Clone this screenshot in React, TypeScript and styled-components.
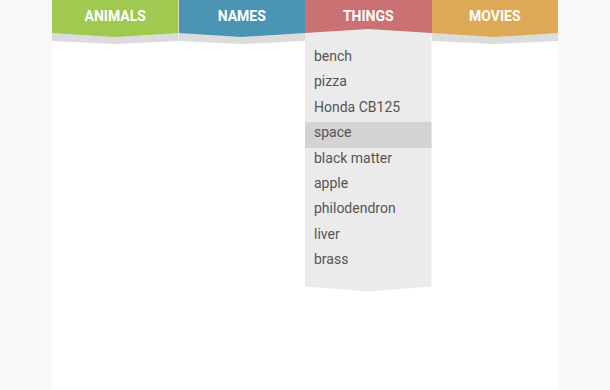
import React, { useState } from 'react';
import styled, { createGlobalStyle } from 'styled-components';

const GlobalStyle = createGlobalStyle`
  html, body {
    margin: 0;
    height: 100%;
    background: #f8f8f8;
    font-family: Roboto, "Liberation Sans", Arial, sans-serif;
  }
  #root {
    height: 100%;
  }
`

const Page = styled.div`
  width: 506px;
  height: 100%;
  margin: 0 auto;
  background: #fff;
`

const Nav = styled.nav`
  display: grid;
  grid-template-columns: repeat(4, 1fr);
`

const Tab = styled.div`
  position: relative;
  height: 44px;
  background: ${p => (p.$open ? 'transparent' : '#dcdcdc')};
  clip-path: ${p => (p.$open ? 'none' : 'polygon(0 0, 100% 0, 100% 41px, 50% 44px, 0 41px)')};
`

const TabHead = styled.button`
  display: block;
  width: 100%;
  height: ${p => (p.$open ? '33px' : '37px')};
  padding: ${p => (p.$open ? '0' : '0 0 4px')};
  border: 0;
  background: ${p => p.$color};
  color: #fff;
  font: bold 14px/33px Roboto, "Liberation Sans", Arial, sans-serif;
  text-transform: uppercase;
  cursor: pointer;
  clip-path: ${p => (p.$open ? 'none' : 'polygon(0 0, 100% 0, 100% 33px, 50% 37px, 0 33px)')};
`

const Menu = styled.ul`
  position: absolute;
  top: 29px;
  left: 0;
  right: 0;
  margin: 0;
  padding: 17px 0 17px;
  list-style: none;
  background: #ebebeb;
  clip-path: polygon(0 4px, 50% 0, 100% 4px, 100% calc(100% - 5px), 50% 100%, 0 calc(100% - 5px));
  z-index: 2;
`

const Item = styled.li`
  height: 25.4px;
  box-sizing: border-box;
  padding: 0 9px 3.6px;
  font-size: 14px;
  line-height: 21.8px;
  color: #555;
  background: ${p => (p.$hover ? '#d3d3d3' : 'transparent')};
  cursor: pointer;
`

const tabs = [
  { name: 'animals', color: '#9fc94f', items: [] as string[] },
  { name: 'names', color: '#4b94b3', items: [] as string[] },
  {
    name: 'things',
    color: '#c97173',
    items: ['bench', 'pizza', 'Honda CB125', 'space', 'black matter', 'apple', 'philodendron', 'liver', 'brass'],
  },
  { name: 'movies', color: '#dea955', items: [] as string[] },
]

export default function App() {
  const [open, setOpen] = useState('things')
  const [hover, setHover] = useState('space')

  return (
    <>
      <GlobalStyle />
      <Page>
        <Nav>
          {tabs.map(tab => {
            const isOpen = open === tab.name
            return (
              <Tab key={tab.name} $open={isOpen}>
                <TabHead $color={tab.color} $open={isOpen} onClick={() => setOpen(isOpen ? '' : tab.name)}>
                  {tab.name}
                </TabHead>
                {isOpen && tab.items.length > 0 && (
                  <Menu>
                    {tab.items.map(item => (
                      <Item key={item} $hover={hover === item} onMouseEnter={() => setHover(item)}>
                        {item}
                      </Item>
                    ))}
                  </Menu>
                )}
              </Tab>
            )
          })}
        </Nav>
      </Page>
    </>
  )
}
